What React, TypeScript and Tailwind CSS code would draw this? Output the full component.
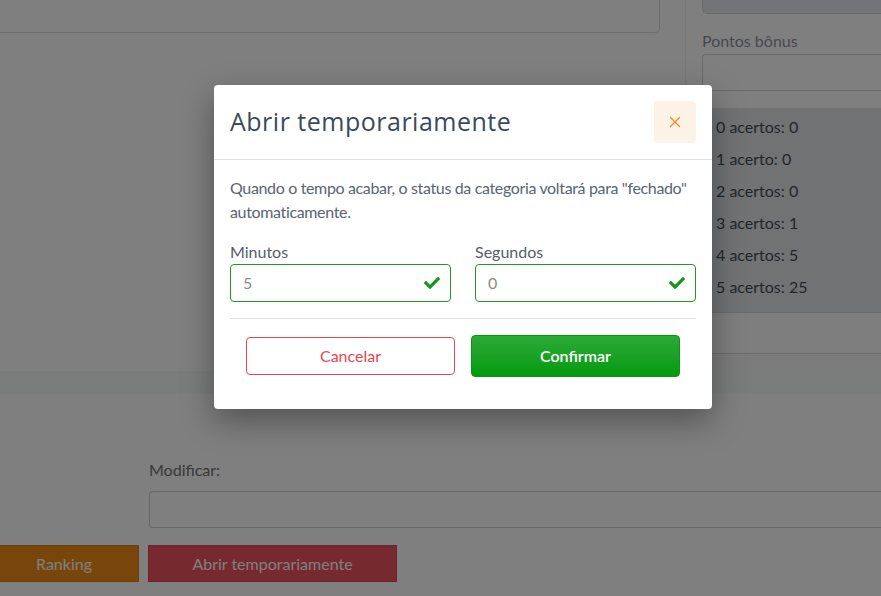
import React from "react";
import { FaCheck } from "react-icons/fa";
import { X } from "lucide-react";

export default function App() {
  const rows = ["0 acertos: 0", "1 acerto: 0", "2 acertos: 0", "3 acertos: 1", "4 acertos: 5", "5 acertos: 25"];
  return (
    <div className="relative w-[881px] h-[596px] overflow-hidden bg-white font-['Lato','Noto_Sans',sans-serif] text-[16px]">
      {/* background page */}
      <div className="flex h-[371px]">
        <div className="w-[686px] border-r border-[#eeeeee] pr-[25px]">
          <div className="h-[33px] border-r border-b border-[#dcdcdc] rounded-br-[5px]" />
        </div>
        <div className="flex-1 pl-[16px] flex flex-col">
          <div className="h-[14px] bg-[#e6e8ee] border-l border-b border-[#d2d4d8] rounded-bl-[5px]" />
          <div className="mt-[17px] leading-[20px] text-[#8f8f9f]">Pontos bônus</div>
          <div className="mt-[3px] h-[37px] border-l border-t border-b border-[#d4d4d4] rounded-l-[4px]" />
          <div className="mt-[17px] h-[205px] bg-[#e3e5e9] border-b border-[#d5d6d9] pl-[14px] pt-[3px] text-[#444c58] leading-[32px]">
            {rows.map((r) => (
              <div key={r} className="h-[32px]">{r}</div>
            ))}
          </div>
          <div className="h-[41px] bg-[#fcfcfc] border-b border-[#d5d5d5]" />
          <div className="flex-1 bg-[#f6f6f6]" />
        </div>
      </div>
      <div className="h-[23px] bg-[#f3f8f4]" />
      <div className="pl-[149px] pt-[66px]">
        <div className="leading-[20px] text-[#707070]">Modificar:</div>
        <div className="mt-[11px] h-[37px] border-l border-t border-b border-[#cfcfcf] rounded-l-[4px]" />
      </div>
      <div className="flex gap-[9px] mt-[17px] ml-[-11px]">
        <div className="w-[150px] h-[37px] bg-[#f08d16] border border-[#e07e0c] text-white flex items-center justify-center">Ranking</div>
        <div className="w-[249px] h-[37px] bg-[#ec525d] border border-[#dc4550] text-white flex items-center justify-center">Abrir temporariamente</div>
      </div>

      {/* overlay */}
      <div className="absolute inset-0 bg-black/50" />

      {/* modal */}
      <div className="absolute left-[214px] top-[85px] w-[498px] bg-white rounded-[4px] shadow-[0_12px_32px_rgba(0,0,0,0.35)]">
        <div className="h-[75px] flex items-center justify-between pl-[16px] pr-[16px] border-b border-[#e2e2e4]">
          <div className="font-['Open_Sans',sans-serif] font-medium text-[25px] text-[#3b4a5b] tracking-[0.5px]">Abrir temporariamente</div>
          <div className="w-[42px] h-[42px] rounded-[4px] bg-[#fdf2e6] flex items-center justify-center">
            <X size={18} strokeWidth={1.7} color="#f5891f" />
          </div>
        </div>
        <div className="px-[16px] pt-[16px]">
          <p className="leading-[24px] text-[#5a6470] tracking-[-0.35px]">
            Quando o tempo acabar, o status da categoria voltará para "fechado" automaticamente.
          </p>
          <div className="mt-[16px] grid grid-cols-2 gap-[24px]">
            {[
              ["Minutos", "5"],
              ["Segundos", "0"],
            ].map(([label, val]) => (
              <div key={label}>
                <div className="leading-[24px] text-[#555d67]">{label}</div>
                <div className="h-[38px] border border-[#1f9a1f] rounded-[4px] flex items-center justify-between pl-[12px] pr-[10px]">
                  <span className="text-[#8a8a8a]">{val}</span>
                  <FaCheck size={16} color="#14961a" />
                </div>
              </div>
            ))}
          </div>
          <div className="mt-[16px] border-t border-[#dfe0e3]" />
          <div className="px-[16px] pt-[16px] pb-[32px] grid grid-cols-2 gap-[16px] items-center">
            <div className="h-[38px] border border-[#e6474d] rounded-[4px] flex items-center justify-center text-[#e5484f]">Cancelar</div>
            <div className="h-[42px] rounded-[4px] bg-gradient-to-b from-[#2aaa37] to-[#019a0a] border border-[#0c9414] flex items-center justify-center text-white font-semibold">Confirmar</div>
          </div>
        </div>
      </div>
    </div>
  );
}
